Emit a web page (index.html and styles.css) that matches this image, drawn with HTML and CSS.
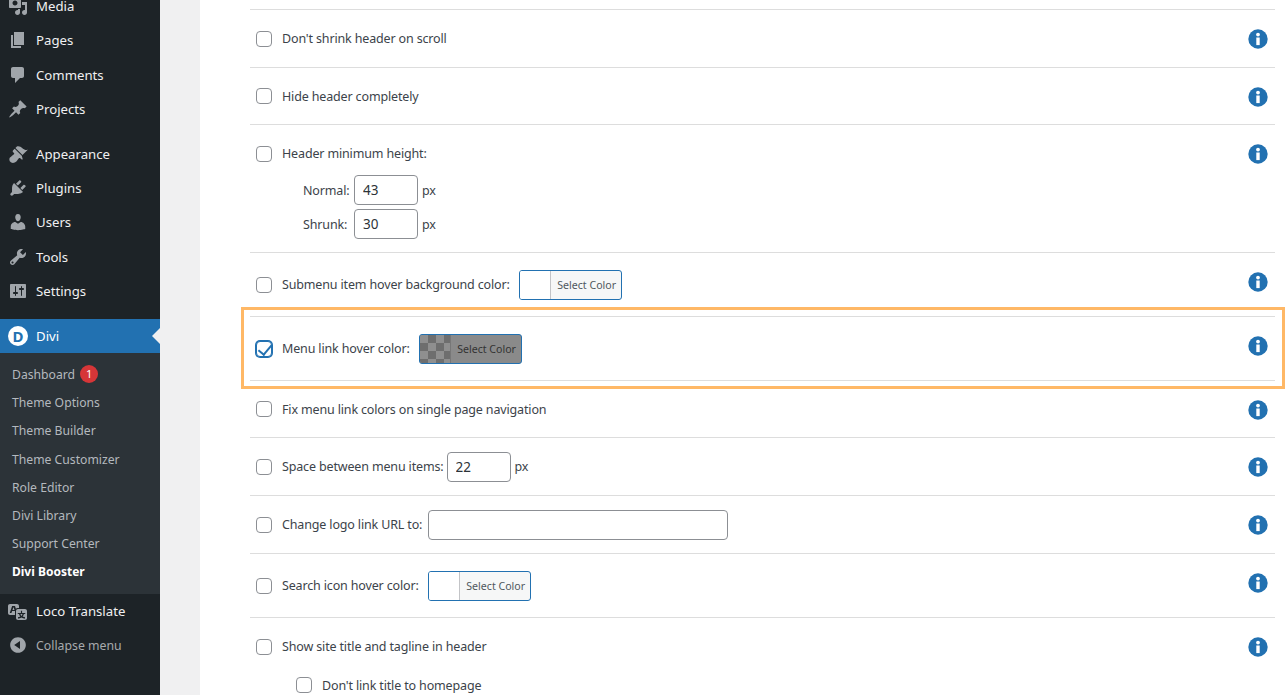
FILE: index.html
```html
<!DOCTYPE html>
<html lang="en">
<head>
    <meta charset="UTF-8">
    <title>Divi Booster</title>
    <link rel="stylesheet" href="styles.css">
</head>
<body>

    <svg class="icon-defs" width="0" height="0">
        <symbol id="i-media" viewBox="0 0 20 20"><path d="M13 11V4c0-.55-.45-1-1-1h-1.67L9 1H5L3.67 3H2c-.55 0-1 .45-1 1v7c0 .55.45 1 1 1h10c.55 0 1-.45 1-1zM7 4.5c1.38 0 2.5 1.12 2.5 2.5S8.38 9.5 7 9.5 4.5 8.38 4.5 7 5.62 4.5 7 4.5zM14 6h5v10.5c0 1.38-1.12 2.5-2.5 2.5S14 17.88 14 16.5s1.12-2.5 2.5-2.5c.17 0 .34.02.5.05V9h-3V6zm-4 8.05V13h2v3.5c0 1.38-1.12 2.5-2.5 2.5S7 17.88 7 16.5 8.12 14 9.5 14c.17 0 .34.02.5.05z"/></symbol>
        <symbol id="i-pages" viewBox="0 0 20 20"><path d="M6 15V2h10v13H6zm-1 1h8v2H3V5h2v11z"/></symbol>
        <symbol id="i-comments" viewBox="0 0 20 20"><path d="M5 2h9c1.1 0 2 .9 2 2v7c0 1.1-.9 2-2 2h-2l-5 5v-5H5c-1.1 0-2-.9-2-2V4c0-1.1.9-2 2-2z"/></symbol>
        <symbol id="i-pin" viewBox="0 0 20 20"><path d="M10.44 3.02l1.82-1.82 6.36 6.35-1.83 1.82c-1.05-.68-2.48-.57-3.41.36l-.75.75c-.92.93-1.04 2.35-.35 3.41l-1.83 1.82-2.41-2.41-2.8 2.79c-.42.42-3.38 2.71-3.8 2.29s1.86-3.39 2.28-3.81l2.79-2.79L4.1 9.36l1.83-1.82c1.05.69 2.48.57 3.4-.36l.75-.75c.93-.92 1.05-2.35.36-3.41z"/></symbol>
        <symbol id="i-brush" viewBox="0 0 20 20"><path d="M14.48 11.06L7.41 3.99l1.5-1.5c.5-.56 2.3-.47 3.51.32 1.21.8 1.43 1.28 2.91 2.1 1.18.64 2.45 1.26 4.45.85zm-.71.71L6.7 4.7 4.93 6.47c-.39.39-.39 1.02 0 1.41l1.06 1.06c.39.39.39 1.03 0 1.42-.6.6-1.43 1.11-2.21 1.69-.35.26-.7.53-1.01.84C1.43 13.23.94 15.3 1.7 16.96c.17.37 1.2 1.4 1.57 1.57 1.66.76 3.73.27 5.07-1.07.31-.31.58-.66.84-1.01.58-.78 1.09-1.61 1.69-2.21.39-.39 1.03-.39 1.42 0l1.06 1.06c.39.39 1.02.39 1.41 0z"/></symbol>
        <symbol id="i-plugins" viewBox="0 0 20 20"><path d="M13.11 4.36L9.87 7.6 8 5.73l3.24-3.24c.35-.34 1.05-.2 1.56.32.52.51.66 1.21.31 1.55zm-8 1.77l.91-1.12 9.01 9.01-1.19.84c-.71.71-2.63 1.16-3.82 1.16H6.14L4.9 17.26c-.59.59-1.54.59-2.12 0-.59-.58-.59-1.53 0-2.12l1.24-1.24v-3.88c0-1.13.4-3.19 1.09-3.89zm7.26 3.97l3.24-3.24c.34-.35 1.04-.21 1.55.31.52.51.66 1.21.31 1.55l-3.24 3.25z"/></symbol>
        <symbol id="i-users" viewBox="0 0 20 20"><path d="M10 9.25c-2.27 0-2.73-3.44-2.73-3.44C7 4.02 7.82 2 9.97 2c2.16 0 2.98 2.02 2.71 3.81 0 0-.41 3.44-2.68 3.44zm0 2.57L12.72 10c2.39 0 4.52 2.33 4.52 4.53v2.49s-3.65 1.13-7.24 1.13c-3.65 0-7.24-1.13-7.24-1.13v-2.49c0-2.25 1.94-4.48 4.47-4.48z"/></symbol>
        <symbol id="i-tools" viewBox="0 0 20 20"><path d="M16.68 9.77c-1.34 1.34-3.3 1.67-4.95.99l-5.41 6.52c-.99.99-2.59.99-3.58 0s-.99-2.59 0-3.57l6.52-5.42c-.68-1.65-.35-3.61.99-4.95 1.28-1.28 3.12-1.62 4.72-1.06l-2.89 2.89 2.82 2.82 2.86-2.87c.53 1.58.18 3.39-1.08 4.65zM3.81 16.21c.4.39 1.04.39 1.43 0 .4-.4.4-1.04 0-1.43-.39-.4-1.03-.4-1.43 0-.39.39-.39 1.03 0 1.43z"/></symbol>
        <symbol id="i-settings" viewBox="0 0 20 20"><path d="M18 16V4c0-.55-.45-1-1-1H3c-.55 0-1 .45-1 1v12c0 .55.45 1 1 1h14c.55 0 1-.45 1-1zM8 11h1c.55 0 1 .45 1 1s-.45 1-1 1H8v1.5c0 .28-.22.5-.5.5s-.5-.22-.5-.5V13H6c-.55 0-1-.45-1-1s.45-1 1-1h1V5.5c0-.28.22-.5.5-.5s.5.22.5.5V11zm5-2h-1c-.55 0-1-.45-1-1s.45-1 1-1h1V5.5c0-.28.22-.5.5-.5s.5.22.5.5V7h1c.55 0 1 .45 1 1s-.45 1-1 1h-1v5.5c0 .28-.22.5-.5.5s-.5-.22-.5-.5V9z"/></symbol>
        <symbol id="i-translate" viewBox="0 0 20 20"><path d="M11 7H9.49c-.63 0-1.25.3-1.59.7L7 5H4.13l-2.39 7h1.69l.74-2H7v4H2c-1.1 0-2-.9-2-2V5c0-1.1.9-2 2-2h7c1.1 0 2 .9 2 2v2zM6.51 9H4.49l1-2.93zM10 8h7c1.1 0 2 .9 2 2v7c0 1.1-.9 2-2 2h-7c-1.1 0-2-.9-2-2v-7c0-1.1.9-2 2-2zm7.25 5v-1.08h-3.17V9.75h-1.16v2.17H9.75V13h1.28c.11.85.56 1.85 1.28 2.62-.87.36-1.89.62-2.31.62-.01.02.22.97.2 1.46.84 0 2.21-.5 3.28-1.15 1.09.65 2.48 1.15 3.34 1.15-.02-.49.2-1.44.2-1.46-.43 0-1.49-.27-2.38-.63.7-.77 1.14-1.77 1.25-2.61h1.36zm-3.81 1.93c-.5-.46-.85-1.13-1.01-1.93h2.09c-.17.8-.51 1.47-1 1.93l-.04.03s-.03-.02-.04-.03z"/></symbol>
        <symbol id="i-collapse" viewBox="0 0 20 20"><path d="M10 2.16c4.33 0 7.84 3.51 7.84 7.84s-3.51 7.84-7.84 7.84S2.16 14.33 2.16 10 5.71 2.16 10 2.16zm2 11.72V6.12L6.18 9.97z"/></symbol>
        <symbol id="i-info" viewBox="0 0 20 20"><circle cx="10" cy="10" r="9.7" fill="#2271b1"/><circle cx="10" cy="5.6" r="1.9" fill="#fff"/><rect x="8.3" y="8.5" width="3.4" height="7.6" fill="#fff"/></symbol>
    </svg>

    <div class="page">
        <nav class="sidebar">
            <ul class="menu">
                <li class="menu-item"><svg class="menu-icon"><use href="#i-media"/></svg>Media</li>
                <li class="menu-item"><svg class="menu-icon"><use href="#i-pages"/></svg>Pages</li>
                <li class="menu-item"><svg class="menu-icon"><use href="#i-comments"/></svg>Comments</li>
                <li class="menu-item"><svg class="menu-icon"><use href="#i-pin"/></svg>Projects</li>
                <li class="menu-sep"></li>
                <li class="menu-item"><svg class="menu-icon"><use href="#i-brush"/></svg>Appearance</li>
                <li class="menu-item"><svg class="menu-icon"><use href="#i-plugins"/></svg>Plugins</li>
                <li class="menu-item"><svg class="menu-icon"><use href="#i-users"/></svg>Users</li>
                <li class="menu-item"><svg class="menu-icon"><use href="#i-tools"/></svg>Tools</li>
                <li class="menu-item"><svg class="menu-icon"><use href="#i-settings"/></svg>Settings</li>
                <li class="menu-sep last-sep"></li>
                <li class="menu-item active"><span class="divi-logo">D</span>Divi</li>
            </ul>
            <ul class="submenu">
                <li>Dashboard <span class="badge">1</span></li>
                <li>Theme Options</li>
                <li>Theme Builder</li>
                <li>Theme Customizer</li>
                <li>Role Editor</li>
                <li>Divi Library</li>
                <li>Support Center</li>
                <li class="current">Divi Booster</li>
            </ul>
            <ul class="menu">
                <li class="menu-item"><svg class="menu-icon"><use href="#i-translate"/></svg>Loco Translate</li>
                <li class="menu-item collapse"><svg class="menu-icon"><use href="#i-collapse"/></svg>Collapse menu</li>
            </ul>
        </nav>

        <main class="content">
            <div class="panel">
                <div class="row">
                    <label class="opt"><input type="checkbox"><span>Don't shrink header on scroll</span></label>
                    <svg class="info"><use href="#i-info"/></svg>
                </div>
                <div class="row">
                    <label class="opt"><input type="checkbox"><span>Hide header completely</span></label>
                    <svg class="info"><use href="#i-info"/></svg>
                </div>
                <div class="row">
                    <div>
                        <label class="opt"><input type="checkbox"><span>Header minimum height:</span></label>
                        <div class="sizes">
                            <div class="size-line"><span class="size-label">Normal:</span><input class="num" type="text" value="43"><span>px</span></div>
                            <div class="size-line"><span class="size-label">Shrunk:</span><input class="num" type="text" value="30"><span>px</span></div>
                        </div>
                    </div>
                    <svg class="info"><use href="#i-info"/></svg>
                </div>
                <div class="row">
                    <label class="opt"><input type="checkbox"><span>Submenu item hover background color:</span>
                        <span class="color-btn"><span class="swatch"></span><span class="color-text">Select Color</span></span>
                    </label>
                    <svg class="info"><use href="#i-info"/></svg>
                </div>
                <div class="row">
                    <div class="highlight-box"></div>
                    <label class="opt"><input type="checkbox" checked><span>Menu link hover color:</span>
                        <span class="color-btn dimmed"><span class="swatch"></span><span class="color-text">Select Color</span></span>
                    </label>
                    <svg class="info"><use href="#i-info"/></svg>
                </div>
                <div class="row">
                    <label class="opt"><input type="checkbox"><span>Fix menu link colors on single page navigation</span></label>
                    <svg class="info"><use href="#i-info"/></svg>
                </div>
                <div class="row">
                    <label class="opt"><input type="checkbox"><span>Space between menu items:</span><input class="num tight" type="text" value="22"><span>px</span></label>
                    <svg class="info"><use href="#i-info"/></svg>
                </div>
                <div class="row">
                    <label class="opt"><input type="checkbox"><span>Change logo link URL to:</span><input class="url tight" type="text"></label>
                    <svg class="info"><use href="#i-info"/></svg>
                </div>
                <div class="row">
                    <label class="opt"><input type="checkbox"><span>Search icon hover color:</span>
                        <span class="color-btn"><span class="swatch"></span><span class="color-text">Select Color</span></span>
                    </label>
                    <svg class="info"><use href="#i-info"/></svg>
                </div>
                <div class="row">
                    <div>
                        <label class="opt"><input type="checkbox"><span>Show site title and tagline in header</span></label>
                        <label class="opt sub-opt"><input type="checkbox"><span>Don't link title to homepage</span></label>
                    </div>
                    <svg class="info"><use href="#i-info"/></svg>
                </div>
            </div>
        </main>
    </div>

</body>
</html>
```

FILE: styles.css
```css
* {
    box-sizing: border-box;
}

html, body {
    margin: 0;
    height: 695px;
    overflow: hidden;
}

body {
    font-family: "Noto Sans", "Open Sans", sans-serif;
    font-size: 12.5px;
    letter-spacing: -0.15px;
    color: #3c434a;
    background-color: #f0f0f1;
}

.icon-defs {
    display: block;
    height: 0;
}

.page {
    display: flex;
    height: 695px;
}

/* Sidebar */
.sidebar {
    width: 160px;
    flex-shrink: 0;
    background-color: #1d2327;
    overflow: hidden;
    letter-spacing: 0;
}

.menu, .submenu {
    list-style: none;
    margin: 0;
    padding: 0;
}

.sidebar > .menu:first-child {
    margin-top: -11px;
}

.menu-item {
    display: flex;
    align-items: center;
    height: 34.3px;
    font-size: 13.2px;
    color: #f0f0f1;
}

.menu-icon {
    width: 20px;
    height: 20px;
    margin: 0 8px;
    fill: #a0a5aa;
    flex-shrink: 0;
}

.menu-sep {
    height: 10.5px;
}

.menu-sep.last-sep {
    height: 10.9px;
}

.menu-item.active {
    position: relative;
    background-color: #2271b1;
    color: #fff;
}

.menu-item.active::after {
    content: "";
    position: absolute;
    right: 0;
    top: 9px;
    border: 8px solid transparent;
    border-right-color: #f0f0f1;
    border-left-width: 0;
}

.menu-item.collapse {
    color: #a7aaad;
    font-size: 12.3px;
}

.divi-logo {
    width: 20px;
    height: 20px;
    margin: 0 8px;
    border-radius: 50%;
    background-color: #fff;
    color: #2271b1;
    font-weight: 700;
    font-size: 15px;
    line-height: 20px;
    text-align: center;
    flex-shrink: 0;
}

.submenu {
    background-color: #2c3338;
    padding: 7px 0 8px;
}

.submenu li {
    display: flex;
    align-items: center;
    gap: 5px;
    height: 28.2px;
    padding-left: 12px;
    font-size: 12.2px;
    color: #b4b9be;
}

.submenu li.current {
    color: #fff;
    font-weight: 700;
    font-size: 12px;
}

.badge {
    width: 18px;
    height: 18px;
    border-radius: 50%;
    background-color: #d63638;
    color: #fff;
    font-size: 11px;
    line-height: 18px;
    text-align: center;
}

/* Main content */
.content {
    flex: 1;
    padding-left: 40px;
    min-width: 0;
}

.panel {
    height: 695px;
    overflow: hidden;
    background-color: #fff;
    padding: 9px 11px 0 50px;
}

.row {
    display: flex;
    justify-content: space-between;
    align-items: flex-start;
    position: relative;
    border-top: 1px solid #ddd;
    padding: 16.5px 7px 16.5px 6px;
}

.opt {
    display: flex;
    align-items: center;
    min-height: 23.5px;
}

.opt > span:not(.color-btn) {
    padding-top: 0.5px;
}

.opt input[type="checkbox"] {
    appearance: none;
    position: relative;
    width: 16px;
    height: 16px;
    margin: 1px 10px 0 0;
    border: 1px solid #8c8f94;
    border-radius: 4px;
    background-color: #fff;
    flex-shrink: 0;
}

.opt input[type="checkbox"]:checked {
    border-color: #2271b1;
    box-shadow: 0 0 0 1px #2271b1;
}

.opt input[type="checkbox"]:checked::before {
    content: "";
    position: absolute;
    left: 4px;
    top: 0;
    width: 6px;
    height: 11px;
    border: solid #2271b1;
    border-width: 0 2px 2px 0;
    transform: rotate(40deg);
}

.sub-opt {
    margin: 15px 0 0 40px;
}

.info {
    width: 20px;
    height: 20px;
    margin-top: 2.5px;
    flex-shrink: 0;
}

/* Sizes under header minimum height */
.sizes {
    display: flex;
    flex-direction: column;
    gap: 4px;
    margin: 10px 0 -4px 47px;
}

.size-line {
    display: flex;
    align-items: center;
}

.size-label {
    width: 51px;
}

.num, .url {
    height: 30px;
    padding: 0 8px;
    border: 1px solid #8c8f94;
    border-radius: 4px;
    font: inherit;
    font-size: 13.5px;
    color: #2c3338;
    background-color: #fff;
}

.num {
    width: 64px;
    margin-right: 4px;
}

.url {
    width: 300px;
}

.tight {
    margin-top: -3px;
    margin-bottom: -3px;
}

.num.tight {
    margin-left: 3px;
}

.url.tight {
    margin-left: 6px;
}

/* Colour picker button */
.color-btn {
    display: inline-flex;
    width: 103px;
    height: 30px;
    margin: 0.5px 0 -0.5px 9px;
    border: 1px solid #2271b1;
    border-radius: 3px;
    overflow: hidden;
    background-color: #f6f7f7;
}

.swatch {
    width: 31px;
    flex-shrink: 0;
    background-color: #fff;
    border-right: 1px solid #c3c4c7;
}

.color-text {
    flex: 1;
    display: flex;
    align-items: center;
    justify-content: center;
    padding-left: 2px;
    font-size: 10.6px;
    letter-spacing: 0;
    color: #50575e;
}

.color-btn.dimmed {
    background-color: #8a8a8a;
}

.color-btn.dimmed .swatch {
    border-right-color: #777;
    background-color: #8f8f8f;
    background-image: conic-gradient(#6e6e6e 25%, transparent 0 50%, #6e6e6e 0 75%, transparent 0);
    background-size: 16px 16px;
}

.color-btn.dimmed .color-text {
    color: #333;
}

/* Orange annotation round the highlighted row */
.highlight-box {
    position: absolute;
    left: -9px;
    right: -10px;
    top: -10px;
    bottom: -9px;
    border: 3px solid #ffb866;
    pointer-events: none;
}
```
